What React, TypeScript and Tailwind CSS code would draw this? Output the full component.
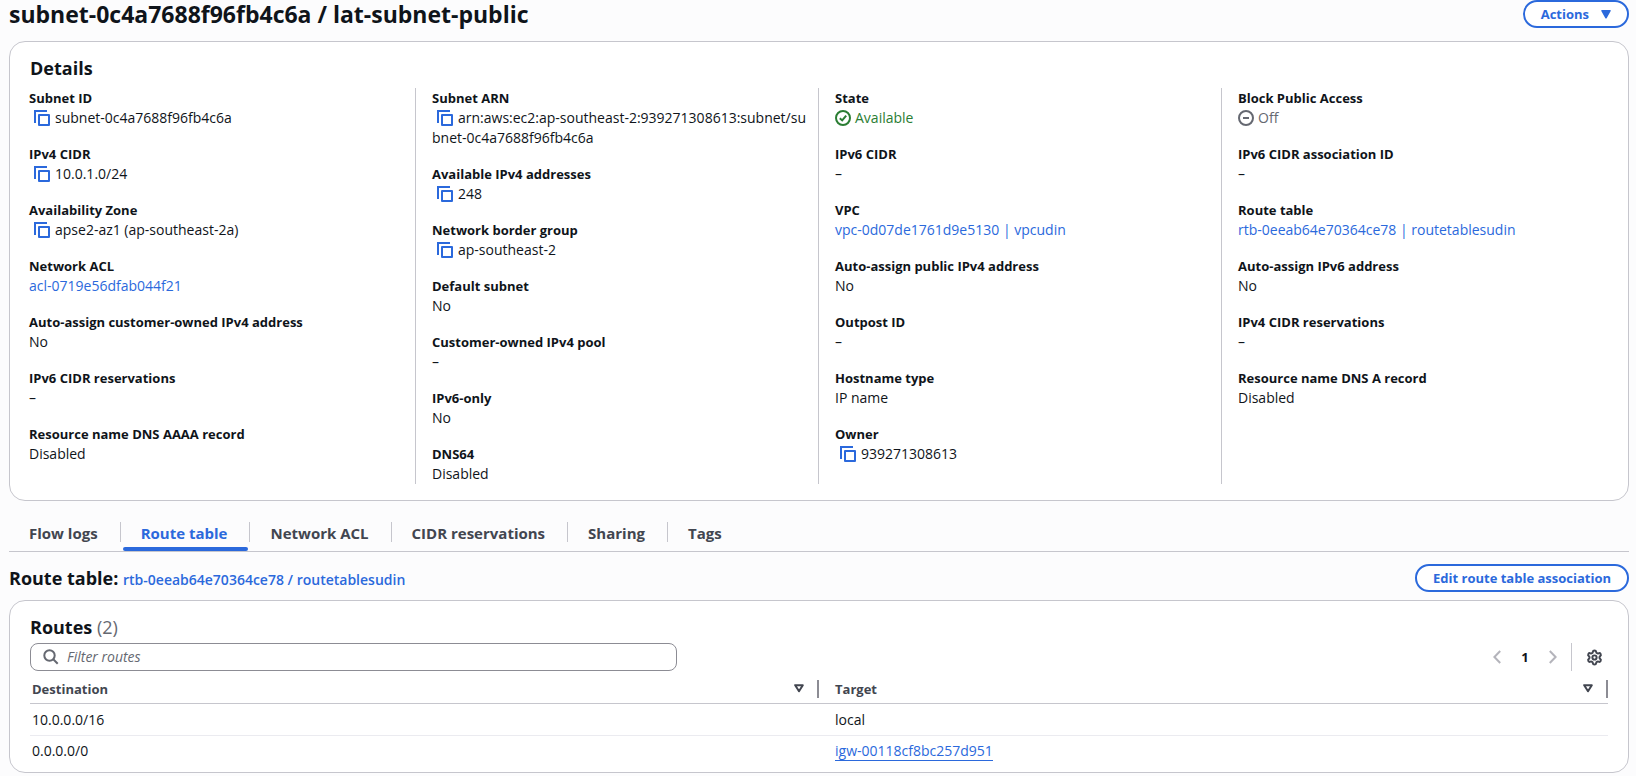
import type { ReactNode } from 'react';
import { Settings } from 'lucide-react';

function CopyIcon() {
  return (
    <svg viewBox="0 0 16 16" className="size-4" fill="none" stroke="currentColor" strokeWidth="2" strokeLinejoin="round">
      <path d="M1 13V1h12" strokeLinejoin="miter" />
      <path d="M5 5h10v10H5z" />
    </svg>
  );
}

function Copyable({ children }: { children: ReactNode }) {
  return (
    <span className="break-all">
      <button type="button" aria-label="Copy" className="mr-[5px] ml-1 inline-flex size-[17px] items-center justify-center align-[-3px] text-[#2b69dc]">
        <CopyIcon />
      </button>
      {children}
    </span>
  );
}

function Link({ children }: { children: ReactNode }) {
  return (
    <a href="#" className="text-[#2b69dc] hover:underline">
      {children}
    </a>
  );
}

const columns: { label: string; value: ReactNode }[][] = [
  [
    { label: 'Subnet ID', value: <Copyable>subnet-0c4a7688f96fb4c6a</Copyable> },
    { label: 'IPv4 CIDR', value: <Copyable>10.0.1.0/24</Copyable> },
    { label: 'Availability Zone', value: <Copyable>apse2-az1 (ap-southeast-2a)</Copyable> },
    { label: 'Network ACL', value: <Link>acl-0719e56dfab044f21</Link> },
    { label: 'Auto-assign customer-owned IPv4 address', value: 'No' },
    { label: 'IPv6 CIDR reservations', value: '–' },
    { label: 'Resource name DNS AAAA record', value: 'Disabled' },
  ],
  [
    { label: 'Subnet ARN', value: <Copyable>arn:aws:ec2:ap-southeast-2:939271308613:subnet/subnet-0c4a7688f96fb4c6a</Copyable> },
    { label: 'Available IPv4 addresses', value: <Copyable>248</Copyable> },
    { label: 'Network border group', value: <Copyable>ap-southeast-2</Copyable> },
    { label: 'Default subnet', value: 'No' },
    { label: 'Customer-owned IPv4 pool', value: '–' },
    { label: 'IPv6-only', value: 'No' },
    { label: 'DNS64', value: 'Disabled' },
  ],
  [
    {
      label: 'State',
      value: (
        <span className="flex items-center gap-1 text-[#2a7d33]">
          <svg viewBox="0 0 16 16" className="size-4" fill="none" stroke="currentColor" strokeWidth="2">
            <circle cx="8" cy="8" r="7" />
            <path d="M4.8 8.2 7.2 10.4 11.2 5.6" />
          </svg>
          Available
        </span>
      ),
    },
    { label: 'IPv6 CIDR', value: '–' },
    { label: 'VPC', value: <Link>vpc-0d07de1761d9e5130 | vpcudin</Link> },
    { label: 'Auto-assign public IPv4 address', value: 'No' },
    { label: 'Outpost ID', value: '–' },
    { label: 'Hostname type', value: 'IP name' },
    { label: 'Owner', value: <Copyable>939271308613</Copyable> },
  ],
  [
    {
      label: 'Block Public Access',
      value: (
        <span className="flex items-center gap-1 text-[#656871]">
          <svg viewBox="0 0 16 16" className="size-4" fill="none" stroke="currentColor" strokeWidth="2">
            <circle cx="8" cy="8" r="7" />
            <path d="M5 8h6" />
          </svg>
          Off
        </span>
      ),
    },
    { label: 'IPv6 CIDR association ID', value: '–' },
    { label: 'Route table', value: <Link>rtb-0eeab64e70364ce78 | routetablesudin</Link> },
    { label: 'Auto-assign IPv6 address', value: 'No' },
    { label: 'IPv4 CIDR reservations', value: '–' },
    { label: 'Resource name DNS A record', value: 'Disabled' },
  ],
];

const tabs = ['Flow logs', 'Route table', 'Network ACL', 'CIDR reservations', 'Sharing', 'Tags'];

function SortIcon() {
  return (
    <svg viewBox="0 0 10 9" className="h-[9px] w-[10px]" fill="none" stroke="currentColor" strokeWidth="2" strokeLinejoin="round">
      <path d="M1.2 1.2h7.6L5 7.2z" />
    </svg>
  );
}

function HeaderCell({ children, className }: { children: string; className: string }) {
  return (
    <th scope="col" className={className}>
      <div className="flex items-center">
        <span className="flex-1 text-left">{children}</span>
        <button type="button" aria-label={`Sort by ${children}`} className="mr-[13px]">
          <SortIcon />
        </button>
        <span className="h-[18px] w-0.5 bg-[#8c8c94]" />
      </div>
    </th>
  );
}

const outlineButton =
  'flex h-7 items-center rounded-full border-2 border-[#2b69dc] bg-white px-4 text-[13px] font-bold text-[#2b69dc]';

export default function App() {
  return (
    <main className="min-h-screen bg-[#fcfcfd] pr-[7px] pl-[9px] font-['Open_Sans','Noto_Sans',sans-serif] text-sm leading-5 text-[#0f141a]">
      <header className="flex h-7 items-center justify-between">
        <h1 className="text-[23px] leading-7 font-bold">subnet-0c4a7688f96fb4c6a / lat-subnet-public</h1>
        <button type="button" className={outlineButton}>
          Actions
          <svg viewBox="0 0 10 9" className="ml-3 h-[9px] w-[10px]" fill="currentColor">
            <path d="M1 0h8q1.3 0 .7 1L5.8 8q-.8 1.2-1.6 0L.3 1Q-.3 0 1 0z" />
          </svg>
        </button>
      </header>

      <section className="mt-[13px] rounded-2xl border border-[#c6c6cd] bg-white px-5 pt-[14px] pb-4">
        <h2 className="pb-2 text-[18px] leading-6 font-bold">Details</h2>
        <div className="-mr-2 -ml-[18px] grid grid-cols-4 gap-x-2">
          {columns.map((fields, i) => (
            <dl key={i} className="flex flex-col gap-4 border-l border-[#c6c6cd] pl-4 first:border-transparent">
              {fields.map((f) => (
                <div key={f.label}>
                  <dt className="text-[13px] leading-5 font-bold">{f.label}</dt>
                  <dd>{f.value}</dd>
                </div>
              ))}
            </dl>
          ))}
        </div>
      </section>

      <nav role="tablist" className="mt-[14px] flex h-[37px] border-b border-[#c6c6cd]">
        {tabs.map((t) => (
          <div key={t} className="group relative flex">
            <button
              type="button"
              role="tab"
              aria-selected={t === 'Route table'}
              className="pt-1.5 pr-[22px] pb-2 pl-5 text-[15px] leading-6 font-bold text-[#424650] aria-selected:text-[#2b69dc]"
            >
              {t}
            </button>
            <span className="mt-[7px] h-5 w-px bg-[#c6c6cd] group-last:hidden" />
            {t === 'Route table' && <span className="absolute right-0.5 bottom-0 left-0.5 h-1 rounded-sm bg-[#2b69dc]" />}
          </div>
        ))}
      </nav>

      <div className="mt-3 flex h-7 items-center justify-between">
        <h2 className="text-[18px] leading-7 font-bold">
          Route table:{' '}
          <a href="#" className="text-sm font-semibold text-[#2b69dc]">
            rtb-0eeab64e70364ce78 / routetablesudin
          </a>
        </h2>
        <button type="button" className={outlineButton}>
          Edit route table association
        </button>
      </div>

      <section className="mt-2 rounded-2xl border border-[#c6c6cd] bg-white px-5 pt-[14px] pb-1.5">
        <h2 className="text-[18px] leading-6 font-bold">
          Routes <span className="font-normal text-[#656871]">(2)</span>
        </h2>
        <div className="mt-1 flex h-7 items-center justify-between">
          <label className="flex h-7 w-[41%] items-center rounded-lg border border-[#8c8c94] bg-white pl-3">
            <svg viewBox="0 0 16 16" className="size-4 text-[#656871]" fill="none" stroke="currentColor" strokeWidth="2">
              <circle cx="6.5" cy="6.5" r="5.2" />
              <path d="m10.3 10.3 4.4 4.4" />
            </svg>
            <input
              type="search"
              aria-label="Filter routes"
              placeholder="Filter routes"
              className="ml-2 min-w-0 flex-1 bg-transparent outline-none placeholder:text-[#656871] placeholder:italic"
            />
          </label>
          <div className="flex h-7 items-center pr-[5px]">
            <button type="button" aria-label="Previous page" className="text-[#b4b4bb]">
              <svg viewBox="0 0 8 14" className="h-[14px] w-2" fill="none" stroke="currentColor" strokeWidth="2">
                <path d="M7.2 1 1.4 7l5.8 6" />
              </svg>
            </button>
            <button type="button" className="w-12 text-center text-[13px] font-bold">
              1
            </button>
            <button type="button" aria-label="Next page" className="text-[#b4b4bb]">
              <svg viewBox="0 0 8 14" className="h-[14px] w-2" fill="none" stroke="currentColor" strokeWidth="2">
                <path d="M.8 1l5.8 6-5.8 6" />
              </svg>
            </button>
            <span className="mr-[14px] ml-[14px] h-7 w-px bg-[#c6c6cd]" />
            <button type="button" aria-label="Preferences" className="text-[#424650]">
              <Settings size={17} strokeWidth={2.8} />
            </button>
          </div>
        </div>
        <table className="w-full table-fixed border-collapse">
          <thead className="text-[13px] text-[#424650]">
            <tr className="h-8 border-b border-[#c6c6cd]">
              <HeaderCell className="w-1/2 pt-1 pl-0.5 font-bold">Destination</HeaderCell>
              <HeaderCell className="pt-1 pl-4 font-bold">Target</HeaderCell>
            </tr>
          </thead>
          <tbody>
            <tr className="h-8 border-b border-[#ebebf0]">
              <td className="pt-0.5 pl-0.5">10.0.0.0/16</td>
              <td className="pt-0.5 pl-4">local</td>
            </tr>
            <tr className="h-[31px]">
              <td className="pl-0.5">0.0.0.0/0</td>
              <td className="pl-4">
                <a href="#" className="border-b border-[#2b69dc] text-[#2b69dc]">
                  igw-00118cf8bc257d951
                </a>
              </td>
            </tr>
          </tbody>
        </table>
      </section>
    </main>
  );
}
